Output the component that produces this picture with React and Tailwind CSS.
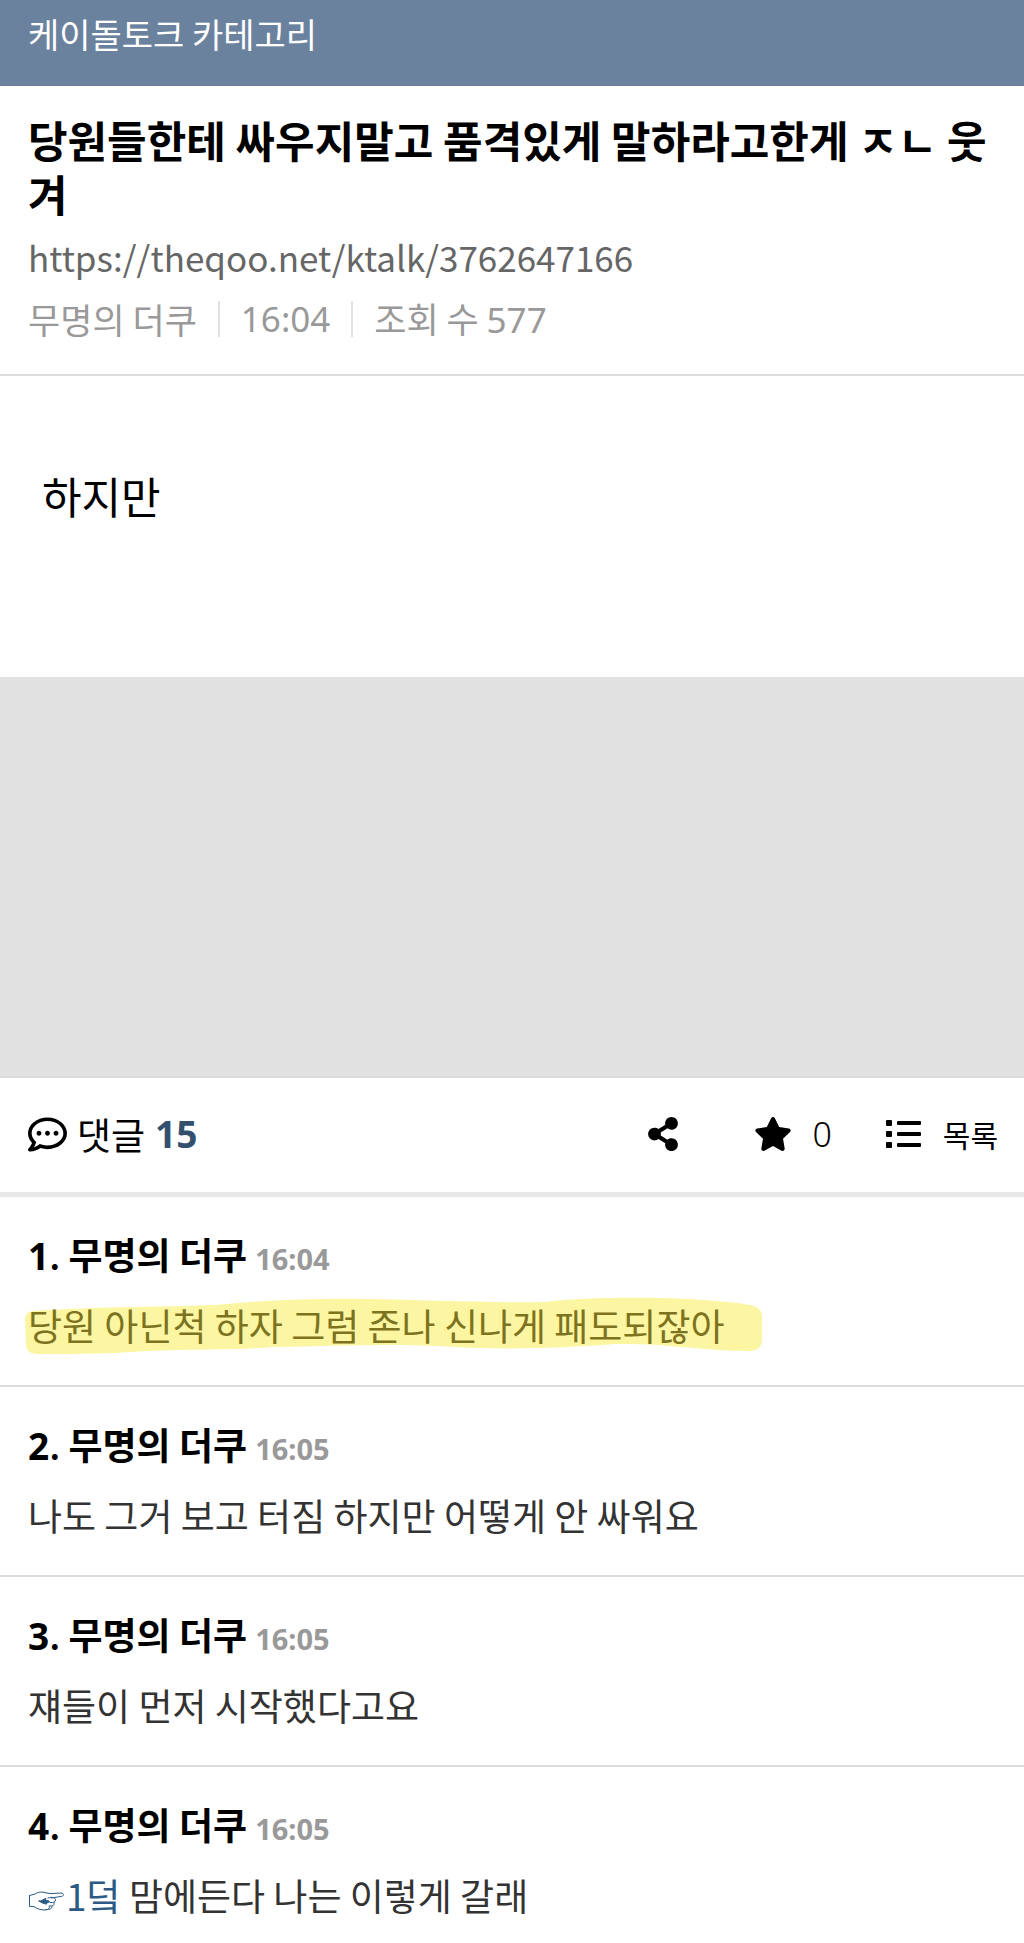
import React from 'react';
import { FaRegCommentDots, FaShareAlt, FaStar } from 'react-icons/fa';

const comments = [
  { id: 1, author: '무명의 더쿠', time: '16:04', text: '당원 아닌척 하자 그럼 존나 신나게 패도되잖아', highlighted: true },
  { id: 2, author: '무명의 더쿠', time: '16:05', text: '나도 그거 보고 터짐 하지만 어떻게 안 싸워요' },
  { id: 3, author: '무명의 더쿠', time: '16:05', text: '쟤들이 먼저 시작했다고요' },
  { id: 4, author: '무명의 더쿠', time: '16:05', text: '맘에든다 나는 이렇게 갈래', replyTo: 1 },
];

function ListIcon() {
  return (
    <svg viewBox="0 0 35 28" className="w-[35px] h-7" fill="currentColor" aria-hidden="true">
      <rect x="0" y="0" width="6" height="6" rx="1" />
      <rect x="0" y="11" width="6" height="6" rx="1" />
      <rect x="0" y="22" width="6" height="6" rx="1" />
      <rect x="11" y="1" width="24" height="4" rx="1" />
      <rect x="11" y="12" width="24" height="4" rx="1" />
      <rect x="11" y="23" width="24" height="4" rx="1" />
    </svg>
  );
}

function PointingHand() {
  return (
    <svg
      viewBox="0 0 38 20"
      className="inline-block w-[38px] h-5 align-baseline"
      fill="none"
      stroke="currentColor"
      strokeWidth="1"
      strokeLinecap="round"
      strokeLinejoin="round"
      aria-hidden="true"
    >
      <path d="M1.5 4.5 L7 3 C9 1.5 12 0.8 15 1.2 C18 1.6 20 2.6 23 2.6 L33 2 C36 2 36.5 5 33.5 5.4 L23 7" />
      <path d="M1.5 4.5 V15.5 L6 15.5 C9 18 13 19 17 19 C19.5 19 21.5 18 21.5 16" />
      <path d="M20 7 C24 5.5 27.5 6.5 27.5 9 C27.5 11 25.5 12 22 11.5" />
      <path d="M26 11.5 C27 14 25 15.5 21 15" />
      <path d="M24 15 C24.5 17.5 22 19 18 18.5" />
      <path d="M11 10 C14 10.5 15 8 18 7.5 L17 9 L21 10 C22 11 20 12 18 11.5 L19 13 C16 13 14 12 11 10 Z" fill="currentColor" />
    </svg>
  );
}

// marker stroke drawn behind the comment text
function Marker() {
  return (
    <svg
      viewBox="0 0 738 58"
      preserveAspectRatio="none"
      className="absolute -left-[3px] top-0.5 w-[738px] h-[58px]"
      fill="#fcf6a2"
      aria-hidden="true"
    >
      <path d="M8 14 C60 10 130 10 190 8 C230 4 290 1 340 2 C400 3 470 6 520 5 C560 0 620 0 664 2 C690 4 710 5 725 8 Q737 10 737 20 L737 44 Q736 54 724 54 C680 54 640 46 590 47 C540 51 480 53 430 50 C370 46 310 49 250 50 C200 54 150 51 90 56 C60 57 30 57 12 57 Q1 57 1 46 L0 22 Q0 15 8 14 Z" />
    </svg>
  );
}

function Comment({ comment }) {
  return (
    <li className="px-7 pt-[30px] pb-[30px] border-b-2 border-[#dcdcdc]">
      <div className="flex items-baseline gap-2">
        <h3 className="text-[37px] leading-[54px] font-bold">
          <span className="font-['Noto_Sans',sans-serif]">{comment.id}</span>
          <span className="font-medium">. </span>
          {comment.author}
        </h3>
        <time className="text-[29px] leading-[54px] font-bold text-[#999] font-['Noto_Sans',sans-serif]">{comment.time}</time>
      </div>
      <div className="relative mt-[9px] leading-[60px] text-[37px] text-[#333]">
        {comment.highlighted && <Marker />}
        <p className={comment.highlighted ? 'relative text-[#7d721e]' : 'relative'}>
          {comment.replyTo && (
            <a href={`#comment-${comment.replyTo}`} className="text-[#2d5a85]">
              <PointingHand />
              {comment.replyTo}덬
            </a>
          )}
          {comment.replyTo && ' '}
          {comment.text}
        </p>
      </div>
    </li>
  );
}

export default function App() {
  return (
    <div className="bg-white text-black font-['Noto_Sans_CJK_KR',sans-serif]">
      <header className="bg-[#6b829e] px-7 pt-[7px] h-[86px]">
        <p className="text-[34px] leading-[54px] text-white">케이돌토크 카테고리</p>
      </header>

      <article>
        <div className="px-7 pt-[26px] pb-6 border-b-2 border-[#dcdcdc]">
          <h1 className="text-[43px] leading-[54px] font-bold break-all">
            당원들한테 싸우지말고 품격있게 말하라고한게 ㅈㄴ 웃겨
          </h1>
          <a
            href="https://theqoo.net/ktalk/3762647166"
            className="block mt-[7px] mb-px text-[35px] leading-[60px] text-[#666]"
          >
            https://theqoo.net/ktalk/3762647166
          </a>
          <div className="flex items-center text-[35px] leading-[60px] text-[#999]">
            <span>무명의 더쿠</span>
            <span className="mx-[21px] h-9 border-l-2 border-[#e2e2e2]" />
            <time className="font-['Noto_Sans',sans-serif]">16:04</time>
            <span className="mx-[21px] h-9 border-l-2 border-[#e2e2e2]" />
            <span>
              조회 수 <span className="font-['Noto_Sans',sans-serif]">577</span>
            </span>
          </div>
        </div>
        <p className="px-[42px] pt-[89px] pb-[152px] text-[43px] leading-[60px]">하지만</p>
        <div className="h-[401px] bg-[#e1e1e1] border-b-2 border-[#dcdcdc]" />
      </article>

      <div className="flex items-center h-[119px] pl-7 pr-[26px] pb-0.5 border-b-5 border-[#e8e8e8]">
        <h2 className="flex items-center text-[37px] leading-[54px]">
          <FaRegCommentDots className="size-[39px] mr-2.5" />
          댓글
          <span className="ml-2.5 font-bold text-[#34506f] font-['Noto_Sans',sans-serif]">15</span>
        </h2>
        <div className="ml-auto flex items-center text-[30px] leading-[54px]">
          <button type="button" aria-label="공유" className="mr-[74px]">
            <FaShareAlt className="size-[34px]" />
          </button>
          <button type="button" className="flex items-center gap-5 mr-[54px]">
            <FaStar className="size-[38px]" />
            <span className="text-[34px] font-light font-['Noto_Sans',sans-serif]">0</span>
          </button>
          <a href="#list" className="flex items-center gap-[22px]">
            <ListIcon />
            목록
          </a>
        </div>
      </div>

      <ul>
        {comments.map((comment) => (
          <Comment key={comment.id} comment={comment} />
        ))}
      </ul>
    </div>
  );
}
